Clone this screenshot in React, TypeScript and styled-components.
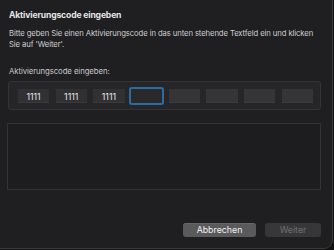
import React from 'react';
import styled, { createGlobalStyle } from 'styled-components';

const GlobalStyle = createGlobalStyle`
  html, body {
    margin: 0;
    padding: 0;
    background: #111112;
  }
  body {
    font-family: Inter, "Liberation Sans", Arial, sans-serif;
    -webkit-font-smoothing: antialiased;
  }
`;

const Window = styled.div`
  box-sizing: border-box;
  width: 333px;
  height: 249px;
  background: #1f1f21;
  border-right: 1px solid #3a3a3c;
  border-bottom: 1px solid #3a3a3c;
  border-bottom-right-radius: 9px;
  padding: 9px 11px 11px 8px;
  display: flex;
  flex-direction: column;
`;

const Title = styled.h1`
  margin: 0 0 0 1px;
  font-size: 8.6px;
  letter-spacing: -0.15px;
  line-height: 12px;
  font-weight: 700;
  color: #e4e4e6;
`;

const Description = styled.p`
  margin: 8px -10px 0 1px;
  font-size: 7.7px;
  letter-spacing: -0.1px;
  line-height: 10.5px;
  white-space: nowrap;
  color: #cfcfd1;
`;

const Label = styled.div`
  margin: 16px 0 0 1px;
  font-size: 7.8px;
  letter-spacing: -0.1px;
  line-height: 11px;
  color: #c6c6c8;
`;

const CodeGroup = styled.div`
  box-sizing: border-box;
  margin-top: 4px;
  width: 313px;
  height: 29px;
  background: #262628;
  border: 1px solid #343436;
  border-radius: 3px;
  padding: 7px 7px 0 9px;
  display: grid;
  grid-template-columns: repeat(8, 1fr);
  column-gap: 6.6px;
  align-items: start;
`;

const CodeField = styled.div<{ $filled?: boolean; $focused?: boolean }>`
  height: 14px;
  background: ${(p) => (p.$focused ? '#29292b' : p.$filled ? '#313133' : '#353537')};
  box-shadow: ${(p) =>
    p.$focused ? '0 0 0 2px #2c6ca3' : 'inset 0 -1px 0 rgba(255,255,255,0.04)'};
  border-radius: ${(p) => (p.$focused ? '1px' : '0')};
  display: flex;
  align-items: center;
  justify-content: center;
  font-size: 8.8px;
  color: #e8e8ea;
`;

const LogBox = styled.div`
  box-sizing: border-box;
  margin-top: 13px;
  margin-left: -1px;
  width: 314px;
  height: 67px;
  background: #1d1d1f;
  border: 1px solid #333335;
`;

const ButtonRow = styled.div`
  margin-top: auto;
  display: flex;
  justify-content: flex-end;
  gap: 9px;
`;

const Button = styled.button<{ $disabled?: boolean; $w: number }>`
  box-sizing: border-box;
  width: ${(p) => p.$w}px;
  height: 14px;
  padding: 0;
  border: none;
  border-radius: 3px;
  font-family: inherit;
  font-size: 8.8px;
  line-height: 14px;
  background: ${(p) => (p.$disabled ? '#373739' : '#5a5a5c')};
  color: ${(p) => (p.$disabled ? '#6e6e70' : '#f0f0f2')};
  box-shadow: ${(p) => (p.$disabled ? 'none' : 'inset 0 0.5px 0 rgba(255,255,255,0.15)')};
`;

const codes = ['1111', '1111', '1111', '', '', '', '', ''];

export default function App() {
  return (
    <>
      <GlobalStyle />
      <Window>
        <Title>Aktivierungscode eingeben</Title>
        <Description>
          Bitte geben Sie einen Aktivierungscode in das unten stehende Textfeld ein und klicken
          <br />
          Sie auf 'Weiter'.
        </Description>
        <Label>Aktivierungscode eingeben:</Label>
        <CodeGroup>
          {codes.map((c, i) => (
            <CodeField key={i} $filled={c !== ''} $focused={i === 3}>
              {c}
            </CodeField>
          ))}
        </CodeGroup>
        <LogBox />
        <ButtonRow>
          <Button $w={73}>Abbrechen</Button>
          <Button $w={56} $disabled>
            Weiter
          </Button>
        </ButtonRow>
      </Window>
    </>
  );
}
